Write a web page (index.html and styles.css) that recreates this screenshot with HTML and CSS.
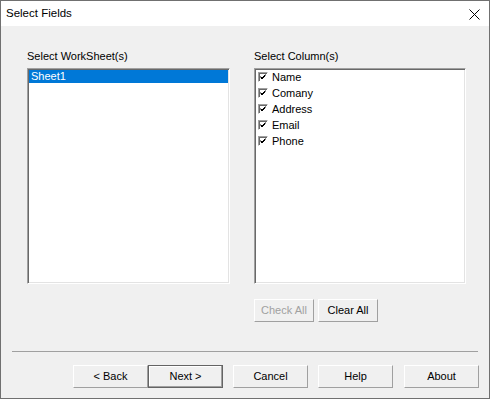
FILE: index.html
```html
<!DOCTYPE html>
<html>
<head>
<meta charset="utf-8">
<link rel="stylesheet" href="styles.css">
</head>
<body>
<div class="window">
  <div class="titlebar">
    <span class="title">Select Fields</span>
    <svg class="close" width="11" height="11" viewBox="0 0 11 11"><path d="M0.5 0.5 L10.5 10.5 M10.5 0.5 L0.5 10.5" stroke="#000" stroke-width="1" fill="none"/></svg>
  </div>
  <div class="main">
    <div class="columns">
      <div class="col col-left">
        <div class="label">Select WorkSheet(s)</div>
        <div class="listbox">
          <div class="sheet-item selected">Sheet1</div>
        </div>
      </div>
      <div class="col col-right">
        <div class="label">Select Column(s)</div>
        <div class="listbox listbox-checks">
          <div class="check-item"><span class="cb"><svg width="10" height="10" viewBox="0 0 10 10"><path d="M2.5 4.5 L4 6 L7.5 2.5 M2.5 5.5 L4 7 L7.5 3.5" stroke="#000" stroke-width="1" fill="none"/></svg></span><span>Name</span></div>
          <div class="check-item"><span class="cb"><svg width="10" height="10" viewBox="0 0 10 10"><path d="M2.5 4.5 L4 6 L7.5 2.5 M2.5 5.5 L4 7 L7.5 3.5" stroke="#000" stroke-width="1" fill="none"/></svg></span><span>Comany</span></div>
          <div class="check-item"><span class="cb"><svg width="10" height="10" viewBox="0 0 10 10"><path d="M2.5 4.5 L4 6 L7.5 2.5 M2.5 5.5 L4 7 L7.5 3.5" stroke="#000" stroke-width="1" fill="none"/></svg></span><span>Address</span></div>
          <div class="check-item"><span class="cb"><svg width="10" height="10" viewBox="0 0 10 10"><path d="M2.5 4.5 L4 6 L7.5 2.5 M2.5 5.5 L4 7 L7.5 3.5" stroke="#000" stroke-width="1" fill="none"/></svg></span><span>Email</span></div>
          <div class="check-item"><span class="cb"><svg width="10" height="10" viewBox="0 0 10 10"><path d="M2.5 4.5 L4 6 L7.5 2.5 M2.5 5.5 L4 7 L7.5 3.5" stroke="#000" stroke-width="1" fill="none"/></svg></span><span>Phone</span></div>
        </div>
        <div class="small-buttons">
          <button class="btn btn-small" disabled>Check All</button>
          <button class="btn btn-small">Clear All</button>
        </div>
      </div>
    </div>
    <div class="separator"></div>
    <div class="nav">
      <button class="btn btn-nav">&lt; Back</button>
      <button class="btn btn-nav btn-default">Next &gt;</button>
      <button class="btn btn-nav gap10">Cancel</button>
      <button class="btn btn-nav gap10">Help</button>
      <button class="btn btn-nav gap11">About</button>
    </div>
  </div>
</div>
</body>
</html>
```

FILE: styles.css
```css
* { box-sizing: border-box; }
html, body { margin: 0; padding: 0; background: #f0f0f0; }
body { font-family: "Liberation Sans", Arial, sans-serif; font-size: 11px; color: #000; }

.window {
  width: 490px;
  height: 399px;
  border: 1px solid #707070;
  background: #f0f0f0;
  display: flex;
  flex-direction: column;
}

.titlebar {
  height: 25px;
  background: #fff;
  display: flex;
  align-items: center;
  justify-content: space-between;
  padding: 0 9px 0 5px;
}
.title { font-size: 11.5px; line-height: 13px; }
.close { display: block; margin-top: 1px; }

.main { flex: 1; display: flex; flex-direction: column; padding-top: 24px; }

.columns { display: flex; padding-left: 26px; height: 272px; }
.col { display: flex; flex-direction: column; }
.col-left { width: 203px; margin-right: 24px; }
.col-right { width: 212px; }

.label { line-height: 13px; height: 13px; margin-bottom: 5px; white-space: nowrap; }

.listbox {
  height: 216px;
  background: #fff;
  border-style: solid;
  border-width: 1px;
  border-color: #a0a0a0 #fff #fff #a0a0a0;
  box-shadow: inset 1px 1px 0 #696969, inset -1px -1px 0 #e3e3e3;
  padding: 1px;
}
.listbox-checks { padding-top: 0; }

.sheet-item { height: 13px; line-height: 13px; padding-left: 2px; }
.sheet-item.selected { background: #0078d7; color: #fff; }

.check-item { height: 16px; display: flex; align-items: center; padding-left: 2px; }
.cb {
  width: 10px; height: 10px; margin-right: 4px; position: relative;
  background: #fff;
  border-style: solid; border-width: 1px;
  border-color: #a0a0a0 #fff #fff #a0a0a0;
  box-shadow: inset 1px 1px 0 #696969;
  display: block;
}
.cb svg { position: absolute; left: -1px; top: -1px; }

.small-buttons { display: flex; gap: 4px; margin-top: 15px; }

.btn {
  font-family: "Liberation Sans", Arial, sans-serif;
  font-size: 11px;
  color: #000;
  background: #f0f0f0;
  height: 23px;
  padding: 0;
  border-style: solid;
  border-width: 1px;
  border-color: #fff #a0a0a0 #a0a0a0 #fff;
  line-height: 19px;
  text-align: center;
}
.btn:disabled { color: #a0a0a0; }
.btn-small { width: 60px; }

.separator {
  margin: 29px 11px 0 11px;
  height: 1px;
  background: #a0a0a0;
}

.nav { display: flex; padding-left: 72px; margin-top: 13px; }
.btn-nav { width: 75px; }
.btn-default {
  border-color: #646464;
  box-shadow: inset -1px -1px 0 #a0a0a0, inset 1px 1px 0 #fff;
}
.gap10 { margin-left: 10px; }
.gap11 { margin-left: 11px; }
```
